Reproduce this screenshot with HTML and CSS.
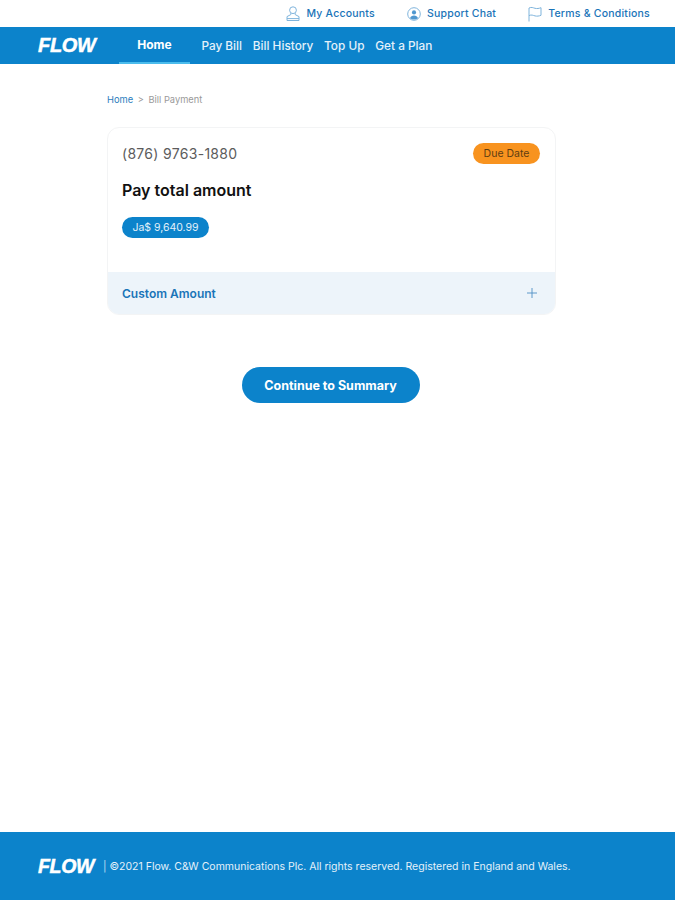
FILE: index.html
```html
<!DOCTYPE html>
<html lang="en">
<head>
    <meta charset="UTF-8">
    <meta name="viewport" content="width=device-width, initial-scale=1.0">
    <title>Bill Payment</title>
    <link rel="stylesheet" href="styles.css">
</head>
<body>
    <div class="top-bar">
        <a class="top-link">
            <svg class="top-icon" viewBox="0 0 14 16"><circle cx="7" cy="4.2" r="3.4"/><path d="M4.800 7.200v1.400L1 10.600v3.900h12v-3.900L9.200 8.600V7.200"/><path d="M1 12.600h12"/></svg>
            My Accounts
        </a>
        <a class="top-link">
            <svg class="top-icon" viewBox="0 0 14 16"><circle cx="7" cy="8" r="6.300"/><circle class="icon-fill" cx="7" cy="6.400" r="2.100"/><path class="icon-fill" d="M3 12.200c.6-2 2-2.800 4-2.800s3.400.8 4 2.800c-2.400 1.600-5.600 1.600-8 0z"/></svg>
            Support Chat
        </a>
        <a class="top-link">
            <svg class="top-icon" viewBox="0 0 14 16"><path d="M1 15.500V2c2.500-1.200 4-.2 6 .3s4 .2 6-.6v7.600c-2 .8-4 1.100-6 .6s-3.500-1.500-6-.3"/></svg>
            Terms &amp; Conditions
        </a>
    </div>
    <header class="nav-bar">
        <span class="logo">FLOW</span>
        <nav class="nav-links">
            <a class="nav-link active">Home</a>
            <a class="nav-link">Pay Bill</a>
            <a class="nav-link">Bill History</a>
            <a class="nav-link">Top Up</a>
            <a class="nav-link">Get a Plan</a>
        </nav>
    </header>
    <main>
        <div class="breadcrumb"><a>Home</a> <span class="crumb-sep">&gt;</span> Bill Payment</div>
        <section class="card">
            <div class="card-body">
                <div class="card-top">
                    <span class="phone">(876) 9763-1880</span>
                    <span class="due-badge">Due Date</span>
                </div>
                <h2>Pay total amount</h2>
                <span class="amount">Ja$ 9,640.99</span>
            </div>
            <div class="custom-row">
                <span>Custom Amount</span>
                <svg class="plus" viewBox="0 0 11 11"><path d="M5.500 0v11M0 5.500h11"/></svg>
            </div>
        </section>
        <div class="actions">
            <button class="continue">Continue to Summary</button>
        </div>
    </main>
    <footer>
        <span class="logo logo-small">FLOW</span>
        <p><span class="footer-bar">|</span> ©2021 Flow. C&amp;W Communications Plc. All rights reserved. Registered in England and Wales.</p>
    </footer>
</body>
</html>
```

FILE: styles.css
```css
* {
    box-sizing: border-box;
}
body {
    font-family: Inter, "Liberation Sans", sans-serif;
    margin: 0;
    min-height: 900px;
    display: flex;
    flex-direction: column;
    background: #fff;
    color: #333;
}
.top-bar {
    height: 27px;
    display: flex;
    justify-content: flex-end;
    align-items: center;
    padding-right: 25px;
}
.top-link {
    display: flex;
    align-items: center;
    gap: 6px;
    margin-left: 32px;
    font-size: 10.5px;
    font-weight: 500;
    letter-spacing: 0.22px;
    color: #1a74b8;
}
.top-icon {
    width: 14px;
    height: 16px;
    fill: none;
    stroke: #7fb4dc;
    stroke-width: 1;
}
.top-icon .icon-fill {
    fill: #4f97cf;
    stroke: none;
}
.nav-bar {
    height: 37px;
    background: #0c83cb;
    display: flex;
    align-items: center;
    padding-left: 38px;
}
.logo {
    font-family: "Liberation Sans", Arial, sans-serif;
    font-size: 20px;
    font-weight: 700;
    font-style: italic;
    letter-spacing: -0.3px;
    color: #fff;
    -webkit-text-stroke: 0.5px #fff;
    width: 81px;
}
.nav-links {
    display: flex;
    align-self: stretch;
}
.nav-link {
    display: flex;
    align-items: center;
    padding: 0 5.4px;
    font-size: 11.8px;
    font-weight: 500;
    color: #e4f1fa;
}
.nav-link.active {
    width: 71px;
    margin-right: 6px;
    justify-content: center;
    font-weight: 700;
    font-size: 12px;
    color: #fff;
    border-bottom: 2px solid #4cbcec;
}
main {
    width: 449px;
    margin-left: 107px;
}
.breadcrumb {
    margin-top: 30px;
    font-size: 9.3px;
    line-height: 12px;
    color: #9a9a9a;
}
.breadcrumb a {
    color: #2b7dbd;
}
.crumb-sep {
    margin: 0 2px;
}
.card {
    margin-top: 21px;
    height: 188px;
    border: 1px solid #f3f4f5;
    border-radius: 12px;
    overflow: hidden;
    display: flex;
    flex-direction: column;
}
.card-body {
    flex: 1;
    padding: 14px 15px 0 14px;
}
.card-top {
    display: flex;
    justify-content: space-between;
    align-items: center;
    height: 22px;
}
.phone {
    font-size: 14px;
    color: #5c5c5c;
    letter-spacing: 0.3px;
}
.due-badge {
    width: 67px;
    height: 21px;
    display: flex;
    align-items: center;
    justify-content: center;
    border-radius: 11px;
    background: #f8931f;
    font-size: 10.5px;
    color: #5f3d12;
}
h2 {
    margin: 16px 0 0;
    font-size: 16px;
    line-height: 20px;
    font-weight: 600;
    color: #111;
}
.amount {
    display: inline-flex;
    align-items: center;
    justify-content: center;
    margin-top: 17px;
    width: 87px;
    height: 21px;
    border-radius: 11px;
    background: #0c83cb;
    font-size: 10.5px;
    color: #e4f1fa;
}
.custom-row {
    height: 42px;
    display: flex;
    align-items: center;
    justify-content: space-between;
    padding: 0 18px 0 14px;
    background: #edf4fa;
    font-size: 12px;
    font-weight: 600;
    color: #1a74b8;
}
.plus {
    width: 10px;
    height: 10px;
    stroke: #4f8fc6;
    stroke-width: 1;
}
.actions {
    display: flex;
    justify-content: center;
    margin-top: 52px;
    padding-right: 2px;
}
.continue {
    width: 178px;
    height: 36px;
    border: none;
    border-radius: 18px;
    background: #0c83cb;
    color: #fff;
    font-family: inherit;
    font-size: 12.5px;
    font-weight: 700;
}
footer {
    margin-top: auto;
    height: 68px;
    background: #0c83cb;
    display: flex;
    align-items: center;
    padding-left: 38px;
    color: #e4f1fa;
}
.logo-small {
    width: 65px;
    font-size: 19.5px;
}
footer p {
    margin: 0;
    font-size: 10.5px;
}
.footer-bar {
    color: #bcdcf2;
}
```
